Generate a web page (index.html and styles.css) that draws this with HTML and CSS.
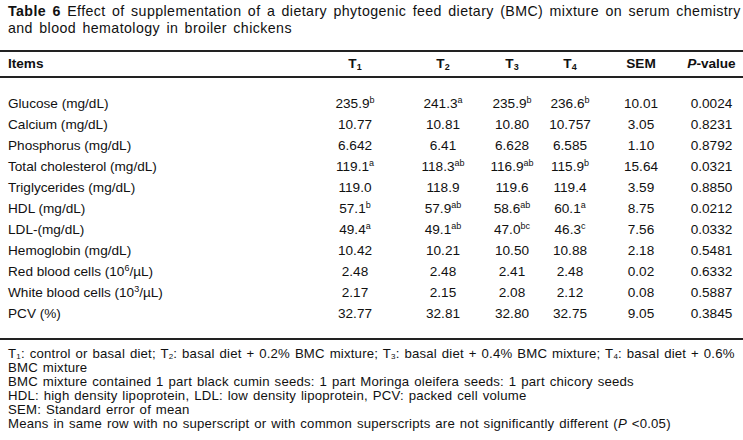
FILE: index.html
```html
<!DOCTYPE html>
<html>
<head>
<meta charset="utf-8">
<link rel="stylesheet" href="styles.css">
</head>
<body>
<p class="caption"><b>Table 6</b> Effect of supplementation of a dietary phytogenic feed dietary (BMC) mixture on serum chemistry<br>and blood hematology in broiler chickens</p>
<table class="data">
  <colgroup>
    <col class="c-items"><col class="c-t1"><col class="c-t2"><col class="c-t3"><col class="c-t4"><col class="c-sem"><col class="c-p">
  </colgroup>
  <thead>
    <tr>
      <th class="items">Items</th>
      <th>T<sub class="sub">1</sub></th>
      <th>T<sub class="sub">2</sub></th>
      <th>T<sub class="sub">3</sub></th>
      <th>T<sub class="sub">4</sub></th>
      <th>SEM</th>
      <th><i>P</i>-value</th>
    </tr>
  </thead>
  <tbody>
    <tr class="first"><td class="items">Glucose (mg/dL)</td><td>235.9<sup class="sup">b</sup></td><td>241.3<sup class="sup">a</sup></td><td>235.9<sup class="sup">b</sup></td><td>236.6<sup class="sup">b</sup></td><td>10.01</td><td>0.0024</td></tr>
    <tr><td class="items">Calcium (mg/dL)</td><td>10.77</td><td>10.81</td><td>10.80</td><td>10.757</td><td>3.05</td><td>0.8231</td></tr>
    <tr><td class="items">Phosphorus (mg/dL)</td><td>6.642</td><td>6.41</td><td>6.628</td><td>6.585</td><td>1.10</td><td>0.8792</td></tr>
    <tr><td class="items">Total cholesterol (mg/dL)</td><td>119.1<sup class="sup">a</sup></td><td>118.3<sup class="sup">ab</sup></td><td>116.9<sup class="sup">ab</sup></td><td>115.9<sup class="sup">b</sup></td><td>15.64</td><td>0.0321</td></tr>
    <tr><td class="items">Triglycerides (mg/dL)</td><td>119.0</td><td>118.9</td><td>119.6</td><td>119.4</td><td>3.59</td><td>0.8850</td></tr>
    <tr><td class="items">HDL (mg/dL)</td><td>57.1<sup class="sup">b</sup></td><td>57.9<sup class="sup">ab</sup></td><td>58.6<sup class="sup">ab</sup></td><td>60.1<sup class="sup">a</sup></td><td>8.75</td><td>0.0212</td></tr>
    <tr><td class="items">LDL-(mg/dL)</td><td>49.4<sup class="sup">a</sup></td><td>49.1<sup class="sup">ab</sup></td><td>47.0<sup class="sup">bc</sup></td><td>46.3<sup class="sup">c</sup></td><td>7.56</td><td>0.0332</td></tr>
    <tr><td class="items">Hemoglobin (mg/dL)</td><td>10.42</td><td>10.21</td><td>10.50</td><td>10.88</td><td>2.18</td><td>0.5481</td></tr>
    <tr><td class="items">Red blood cells (10<sup class="sup">6</sup>/µL)</td><td>2.48</td><td>2.48</td><td>2.41</td><td>2.48</td><td>0.02</td><td>0.6332</td></tr>
    <tr><td class="items">White blood cells (10<sup class="sup">3</sup>/µL)</td><td>2.17</td><td>2.15</td><td>2.08</td><td>2.12</td><td>0.08</td><td>0.5887</td></tr>
    <tr class="last"><td class="items">PCV (%)</td><td>32.77</td><td>32.81</td><td>32.80</td><td>32.75</td><td>9.05</td><td>0.3845</td></tr>
  </tbody>
</table>
<div class="notes">
  <p>T<sub class="nsub">1</sub>: control or basal diet; T<sub class="nsub">2</sub>: basal diet + 0.2% BMC mixture; T<sub class="nsub">3</sub>: basal diet + 0.4% BMC mixture; T<sub class="nsub">4</sub>: basal diet + 0.6%<br>BMC mixture</p>
  <p>BMC mixture contained 1 part black cumin seeds: 1 part Moringa oleifera seeds: 1 part chicory seeds</p>
  <p>HDL: high density lipoprotein, LDL: low density lipoprotein, PCV: packed cell volume</p>
  <p>SEM: Standard error of mean</p>
  <p>Means in same row with no superscript or with common superscripts are not significantly different (<i>P</i> &lt;0.05)</p>
</div>
</body>
</html>
```

FILE: styles.css
```css
html, body {
  margin: 0;
  padding: 0;
  background: #fff;
}
body {
  font-family: "Liberation Sans", Arial, sans-serif;
  color: #111;
  font-size: 13.6px;
}
.caption {
  margin: 0 0 13px 0;
  padding: 3px 8px 0;
  line-height: 17px;
  font-size: 14.2px;
  letter-spacing: 0.42px;
  word-spacing: 2px;
  white-space: nowrap;
}
.data {
  width: 743px;
  table-layout: fixed;
  border-collapse: collapse;
  border-spacing: 0;
}
.c-items { width: 310px; }
.c-t1 { width: 90px; }
.c-t2 { width: 86px; }
.c-t3 { width: 52px; }
.c-t4 { width: 64px; }
.c-sem { width: 78px; }
.c-p { width: 63px; }
.data th, .data td {
  padding: 0;
  text-align: center;
  white-space: nowrap;
  font-weight: normal;
}
.data th {
  font-weight: bold;
  height: 24px;
  line-height: 24px;
  border-top: 2px solid #222;
  border-bottom: 2px solid #222;
}
.data td {
  height: 21px;
  line-height: 21px;
}
.data .items {
  text-align: left;
  padding-left: 8px;
}
.data tr.first td {
  padding-top: 15px;
}
.data tr.last td {
  padding-bottom: 14px;
  border-bottom: 2px solid #222;
}
.sup {
  font-size: 9px;
  line-height: 0;
  vertical-align: 5px;
}
.sub {
  font-size: 9px;
  line-height: 0;
  vertical-align: -2px;
}
.nsub {
  font-size: 8px;
  line-height: 0;
  vertical-align: baseline;
  position: relative;
  top: 1px;
}
.notes {
  margin-top: 7px;
  padding: 0 8px;
  line-height: 14px;
  font-size: 13.2px;
  letter-spacing: 0.2px;
  word-spacing: 1px;
  white-space: nowrap;
}
.notes p {
  margin: 0;
}
```
